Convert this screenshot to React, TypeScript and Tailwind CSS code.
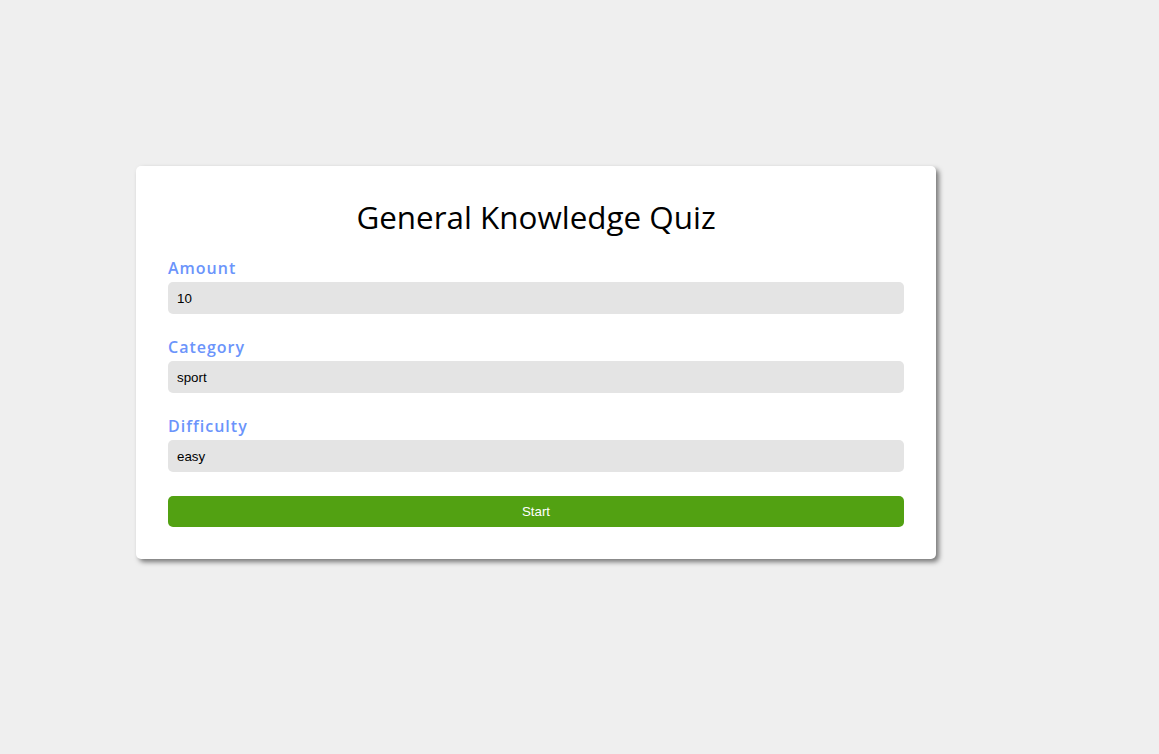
export default function App() {
  const fields = [
    { label: 'Amount', value: '10' },
    { label: 'Category', value: 'sport' },
    { label: 'Difficulty', value: 'easy' },
  ]

  return (
    <div className="min-h-screen w-full bg-[#efefef] pt-[166px] pl-[136px]">
      <div className="w-[800px] rounded-[5px] bg-white px-8 pt-8 pb-8 shadow-[3px_3px_5px_rgba(0,0,0,0.5)]">
        <h1 className="text-center text-[31.4px] leading-[38px] font-medium text-black font-['Open_Sans',sans-serif]">
          General Knowledge Quiz
        </h1>

        {fields.map((f, i) => (
          <div key={f.label} className={i === 0 ? 'mt-[23px]' : 'mt-[24px]'}>
            <label className="block text-[16px] leading-[18px] font-semibold tracking-[1px] text-[#6b94fb] font-['Open_Sans',sans-serif]">
              {f.label}
            </label>
            <input
              readOnly
              value={f.value}
              className="mt-[5px] block h-[32px] w-full rounded-[5px] bg-[#e4e4e4] px-[9px] text-[13.33px] text-black outline-none font-['Liberation_Sans',Arial,sans-serif]"
            />
          </div>
        ))}

        <button className="mt-[24px] block h-[31px] w-full rounded-[5px] bg-[#52a112] text-[13.33px] text-white font-['Liberation_Sans',Arial,sans-serif]">
          Start
        </button>
      </div>
    </div>
  )
}
